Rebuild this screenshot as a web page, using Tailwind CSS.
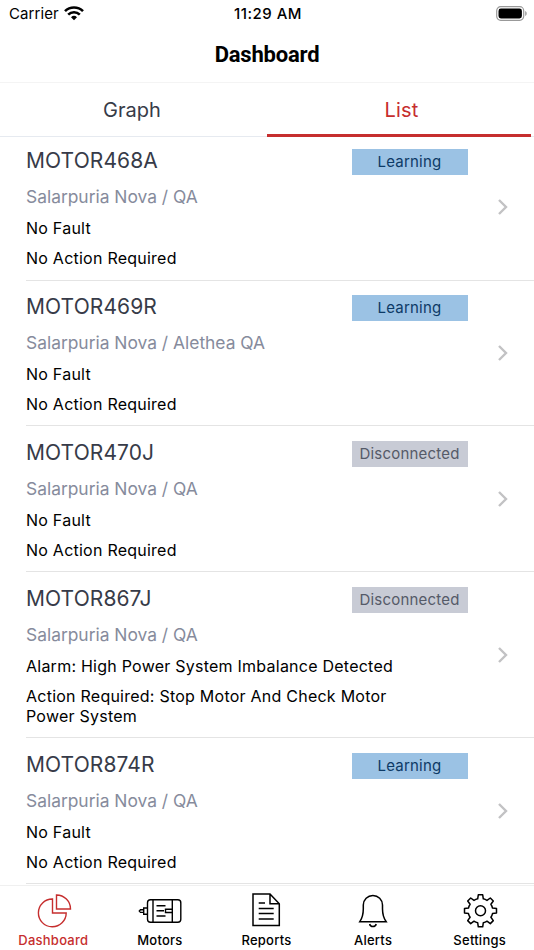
<!DOCTYPE html>
<html lang="en">
<head>
    <meta charset="UTF-8">
    <meta name="viewport" content="width=device-width, initial-scale=1.0">
    <title>Dashboard</title>
    <script src="https://cdn.jsdelivr.net/npm/@tailwindcss/browser@4"></script>
</head>
<body class="bg-white text-black font-['Inter',sans-serif] h-[950px] flex flex-col overflow-hidden">

    <!-- Status Bar -->
    <div class="h-7 shrink-0 grid grid-cols-3 items-center pl-[9px] pr-[7px]">
        <div class="flex items-center gap-[5px] pb-px">
            <span class="text-[15px] tracking-[0.1px] pt-px">Carrier</span>
            <svg class="w-5 h-[15px]" viewBox="0 0 20 15" fill="none" stroke="black" stroke-width="2.6">
                <path d="M1 5.2a12.8 12.8 0 0 1 18 0"/>
                <path d="M4.2 8.7a8.2 8.2 0 0 1 11.6 0"/>
                <path d="M10 14.2l-3-3a4.3 4.3 0 0 1 6 0z" fill="black" stroke="none"/>
            </svg>
        </div>
        <div class="text-center text-[15px] font-medium tracking-[0.5px]">11:29 AM</div>
        <div class="flex justify-end pb-px">
            <svg class="w-[31px] h-[15px]" viewBox="0 0 31 15">
                <rect x="0.7" y="0.7" width="27" height="13.6" rx="4" fill="none" stroke="#999" stroke-width="1.2"/>
                <rect x="2.5" y="2.5" width="23.4" height="10" rx="2.4"/>
                <path d="M29.2 5v5c2-1 2-4 0-5z" fill="#999"/>
            </svg>
        </div>
    </div>

    <!-- Title -->
    <h1 class="h-[55px] shrink-0 border-b border-[#f4f4f4] flex items-center justify-center text-[22px] tracking-[-0.2px] font-bold font-['Roboto',sans-serif] pb-px">Dashboard</h1>

    <!-- Tabs -->
    <div class="h-[54px] shrink-0 flex pr-[3px] text-xl border-b border-[#e6eaf0]">
        <div class="w-[267px] h-[54px] flex items-center justify-center text-[#373b48] pr-[3px]">Graph</div>
        <div class="flex-1 h-[54px] flex items-center justify-center text-[#c62e2e] border-b-3 border-[#c62e2e] pt-[3px] pl-[5px] tracking-[0.2px]">List</div>
    </div>

    <!-- Motor List -->
    <div class="pl-[26px] h-[748px] shrink-0">
        <div class="h-36 border-b border-[#e4e4e4] flex items-end">
            <div class="w-[325.5px] h-[131px]">
                <h2 class="text-[21px] leading-6 tracking-[0.1px] text-[#373b48]">MOTOR468A</h2>
                <p class="mt-3 text-[17.4px] leading-6 text-[#868b9c]">Salarpuria Nova / QA</p>
                <p class="mt-[9px] text-base leading-5 tracking-[0.24px]">No Fault</p>
                <p class="mt-[10px] text-base leading-5 tracking-[0.24px]">No Action Required</p>
            </div>
            <div class="w-29 h-[131px]"><div class="h-[26px] bg-[#9bc2e4] text-[#0d3a66] text-[15px] tracking-[0.2px] flex items-center justify-center">Learning</div></div>
            <svg class="w-3 h-4 ml-[29px] mb-[65px]" viewBox="0 0 12 16" fill="none" stroke="#c2c2c4" stroke-width="2.4"><path d="M2 1l7 7-7 7"/></svg>
        </div>

        <div class="h-[145px] border-b border-[#e4e4e4] flex items-end">
            <div class="w-[325.5px] h-[130px]">
                <h2 class="text-[21px] leading-6 tracking-[0.1px] text-[#373b48]">MOTOR469R</h2>
                <p class="mt-3 text-[17.4px] leading-6 text-[#868b9c]">Salarpuria Nova / Alethea QA</p>
                <p class="mt-[9px] text-base leading-5 tracking-[0.24px]">No Fault</p>
                <p class="mt-[10px] text-base leading-5 tracking-[0.24px]">No Action Required</p>
            </div>
            <div class="w-29 h-[130px]"><div class="h-[26px] bg-[#9bc2e4] text-[#0d3a66] text-[15px] tracking-[0.2px] flex items-center justify-center">Learning</div></div>
            <svg class="w-3 h-4 ml-[29px] mb-16" viewBox="0 0 12 16" fill="none" stroke="#c2c2c4" stroke-width="2.4"><path d="M2 1l7 7-7 7"/></svg>
        </div>

        <div class="h-[146px] border-b border-[#e4e4e4] flex items-end">
            <div class="w-[325.5px] h-[130px]">
                <h2 class="text-[21px] leading-6 tracking-[0.1px] text-[#373b48]">MOTOR470J</h2>
                <p class="mt-3 text-[17.4px] leading-6 text-[#868b9c]">Salarpuria Nova / QA</p>
                <p class="mt-[9px] text-base leading-5 tracking-[0.24px]">No Fault</p>
                <p class="mt-[10px] text-base leading-5 tracking-[0.24px]">No Action Required</p>
            </div>
            <div class="w-29 h-[130px]"><div class="h-[26px] bg-[#c8cbd5] text-[#555a68] text-[15px] tracking-[0.2px] flex items-center justify-center">Disconnected</div></div>
            <svg class="w-3 h-4 ml-[29px] mb-16" viewBox="0 0 12 16" fill="none" stroke="#c2c2c4" stroke-width="2.4"><path d="M2 1l7 7-7 7"/></svg>
        </div>

        <div class="h-[166px] border-b border-[#e4e4e4] flex items-end">
            <div class="w-[325.5px] h-[150px]">
                <h2 class="text-[21px] leading-6 tracking-[0.1px] text-[#373b48]">MOTOR867J</h2>
                <p class="mt-3 text-[17.4px] leading-6 text-[#868b9c]">Salarpuria Nova / QA</p>
                <p class="mt-[9px] text-base leading-5 tracking-[0.24px] whitespace-nowrap">Alarm: High Power System Imbalance Detected</p>
                <p class="mt-[10px] text-base leading-5 tracking-[0.24px] whitespace-nowrap">Action Required: Stop Motor And Check Motor<br>Power System</p>
            </div>
            <div class="w-29 h-[150px]"><div class="h-[26px] bg-[#c8cbd5] text-[#555a68] text-[15px] tracking-[0.2px] flex items-center justify-center">Disconnected</div></div>
            <svg class="w-3 h-4 ml-[29px] mb-[74px]" viewBox="0 0 12 16" fill="none" stroke="#c2c2c4" stroke-width="2.4"><path d="M2 1l7 7-7 7"/></svg>
        </div>

        <div class="h-[146px] border-b border-[#e4e4e4] flex items-end">
            <div class="w-[325.5px] h-[130px]">
                <h2 class="text-[21px] leading-6 tracking-[0.1px] text-[#373b48]">MOTOR874R</h2>
                <p class="mt-3 text-[17.4px] leading-6 text-[#868b9c]">Salarpuria Nova / QA</p>
                <p class="mt-[9px] text-base leading-5 tracking-[0.24px]">No Fault</p>
                <p class="mt-[10px] text-base leading-5 tracking-[0.24px]">No Action Required</p>
            </div>
            <div class="w-29 h-[130px]"><div class="h-[26px] bg-[#9bc2e4] text-[#0d3a66] text-[15px] tracking-[0.2px] flex items-center justify-center">Learning</div></div>
            <svg class="w-3 h-4 ml-[29px] mb-16" viewBox="0 0 12 16" fill="none" stroke="#c2c2c4" stroke-width="2.4"><path d="M2 1l7 7-7 7"/></svg>
        </div>
    </div>

    <!-- Bottom Navigation -->
    <nav class="flex-1 border-t border-[#f0f0f0] grid grid-cols-5 text-[13px] tracking-[0.25px] font-medium pr-px">
        <a class="flex flex-col items-center text-[#c62e2e]">
            <svg class="w-11 h-[46px] shrink-0" viewBox="0 0 44 46" fill="none" stroke="currentColor" stroke-width="1.4">
                <path d="M21.500 13v14h13.700A13.900 13.900 0 1 1 21.500 13z"/>
                <path d="M25.500 9v14h14A14 14 0 0 0 25.500 9z"/>
            </svg>
            <span class="leading-4">Dashboard</span>
        </a>
        <a class="flex flex-col items-center">
            <svg class="w-11 h-[46px] shrink-0" viewBox="0 0 44 46" fill="none" stroke="currentColor" stroke-width="1.4">
                <rect x="9.500" y="13.700" width="33.300" height="22.600" rx="3"/>
                <path d="M15 13.700v22.600M34.300 13.700v22.600M18.500 19.700h9M18.500 24.800h7.500M18.500 30h9M27.500 23.200h6.800v3.300h-6.800zM9.500 22H5.700v6.300h3.800M5.700 23.700H2.500L1.300 25l1.200 1.400h3.200"/>
            </svg>
            <span class="leading-4">Motors</span>
        </a>
        <a class="flex flex-col items-center">
            <svg class="w-11 h-[46px] shrink-0" viewBox="0 0 44 46" fill="none" stroke="currentColor" stroke-width="1.5">
                <path d="M9 8h17l9.300 9.700v21.800H9zM26 8v9.700h9.300M14.700 17H21M14.700 22.500h15M14.700 27.600h15M14.700 33h15"/>
            </svg>
            <span class="leading-4">Reports</span>
        </a>
        <a class="flex flex-col items-center">
            <svg class="w-11 h-[46px] shrink-0" viewBox="0 0 44 46" fill="none" stroke="currentColor" stroke-width="1.5">
                <path d="M8.800 35.700c3-4.500 3.500-7 3.500-12.700v-4a9.600 9.600 0 0 1 19.200 0v4c0 5.700.5 8.200 3.700 12.700zM18.600 38a3.400 3.400 0 0 0 6.600 0"/>
            </svg>
            <span class="leading-4">Alerts</span>
        </a>
        <a class="flex flex-col items-center">
            <svg class="w-11 h-[46px] shrink-0" viewBox="0 0 44 46" fill="none" stroke="currentColor" stroke-width="1.5" stroke-linejoin="round">
                <circle cx="22.500" cy="24.800" r="5"/>
                <path d="M20.300 8.800h4.400l.6 4q2 .4 3.700 1.600l3.300-2.400 3 3-2.400 3.300q1.200 1.700 1.600 3.700l4 .6v4.400l-4 .6q-.4 2-1.600 3.700l2.400 3.300-3 3-3.300-2.400q-1.700 1.200-3.700 1.600l-.6 4h-4.400l-.6-4q-2-.4-3.700-1.600l-3.300 2.400-3-3 2.400-3.300q-1.200-1.700-1.600-3.700l-4-.6v-4.400l4-.6q.4-2 1.600-3.700l-2.400-3.300 3-3 3.300 2.400q1.700-1.200 3.700-1.600z"/>
            </svg>
            <span class="leading-4">Settings</span>
        </a>
    </nav>

</body>
</html>
